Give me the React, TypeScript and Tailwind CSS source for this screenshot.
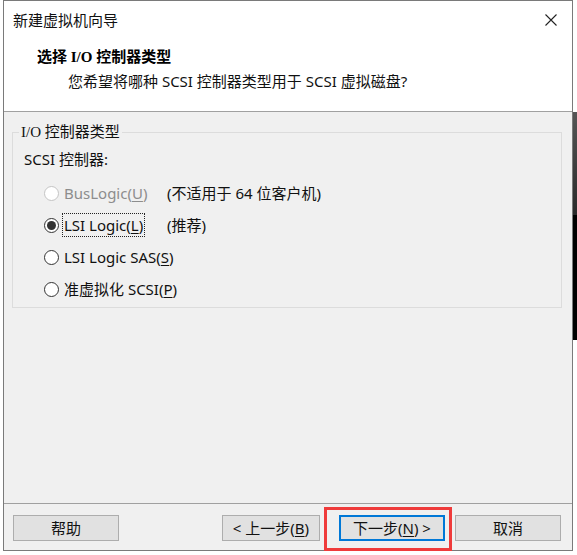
import React from 'react';

const UI = { fontFamily: '"Noto Sans", "Noto Sans CJK SC", sans-serif' };
const SERIF = { fontFamily: '"Liberation Serif", "Noto Sans CJK SC", serif' };

type Opt = { label: string; key: string; note?: string; checked?: boolean; disabled?: boolean; focus?: boolean };

const OPTIONS: Opt[] = [
  { label: 'BusLogic', key: 'U', note: '(不适用于 64 位客户机)', disabled: true },
  { label: 'LSI Logic', key: 'L', note: '(推荐)', checked: true, focus: true },
  { label: 'LSI Logic SAS', key: 'S' },
  { label: '准虚拟化 SCSI', key: 'P' },
];

function Radio({ checked, disabled }: { checked?: boolean; disabled?: boolean }) {
  return (
    <span
      className={`w-[15px] h-[15px] rounded-full border bg-white flex items-center justify-center shrink-0 ${
        disabled ? 'border-[#c4c4c4]' : 'border-[#333333]'
      }`}
    >
      {checked && <span className="w-[9px] h-[9px] rounded-full bg-[#333333]" />}
    </span>
  );
}

function Btn({ children, w, primary }: { children: React.ReactNode; w: string; primary?: boolean }) {
  return (
    <button
      className={`${w} h-[26px] bg-[#e1e1e1] text-[15px] leading-none text-[#111] flex items-center justify-center whitespace-nowrap ${
        primary ? 'border-2 border-[#0078d7]' : 'border border-[#adadad]'
      }`}
    >
      {children}
    </button>
  );
}

export default function App() {
  return (
    <div className="relative w-[577px] h-[555px] bg-white overflow-hidden" style={UI}>
      {/* background window peeking out on the right */}
      <div className="absolute left-[573px] top-[112px] w-[4px] h-[103px] bg-gradient-to-b from-[#555] to-[#2a2a2a]" />
      <div className="absolute left-[573px] top-[215px] w-[4px] h-[125px] bg-black" />

      <div className="ml-[3px] w-[570px] h-[551px] border border-[#7a7a7a] bg-[#f0f0f0] flex flex-col">
        {/* title + header */}
        <div className="h-[111px] bg-white border-b border-[#a0a0a0] shrink-0">
          <div className="h-[38px] flex items-center justify-between pl-[9px] pr-[15px]">
            <span className="text-[15px] text-[#111]">新建虚拟机向导</span>
            <svg width="12" height="12" viewBox="0 0 12 12" className="text-[#222]">
              <path d="M0.5 0.5 L11.5 11.5 M11.5 0.5 L0.5 11.5" stroke="currentColor" strokeWidth="1.1" />
            </svg>
          </div>
          <div className="pl-[33px] mt-[8px] text-[15px] leading-[20px] font-bold text-black" style={SERIF}>
            选择 I/O 控制器类型
          </div>
          <div className="pl-[64px] mt-[4px] text-[15px] leading-[20px] text-[#111]">
            您希望将哪种 SCSI 控制器类型用于 SCSI 虚拟磁盘?
          </div>
        </div>

        {/* body */}
        <div className="flex-1 pt-[9px]">
          <fieldset className="ml-[8px] mr-[10px] h-[187px] border border-[#dcdcdc] px-[11px]">
            <legend className="-ml-[5px] px-[2px] text-[15px] leading-[22px] text-[#111]" style={SERIF}>
              I/O 控制器类型
            </legend>
            <div className="mt-[6px] text-[15px] leading-[20px] text-[#111]">SCSI 控制器:</div>
            <div className="mt-[8px] pl-[20px] flex flex-col">
              {OPTIONS.map((o) => (
                <div key={o.key} className="h-[32px] flex items-center text-[15px] leading-[20px] whitespace-nowrap">
                  <Radio checked={o.checked} disabled={o.disabled} />
                  <span className={`ml-[4px] px-[1px] w-[104px] ${o.disabled ? 'text-[#8d8d8d]' : 'text-[#111]'}`}>
                    <span className={o.focus ? 'outline outline-1 outline-dotted outline-[#222] outline-offset-[1px]' : ''}>
                      {o.label}(<span className="underline underline-offset-2">{o.key}</span>)
                    </span>
                  </span>
                  {o.note && <span className="text-[#111]">{o.note}</span>}
                </div>
              ))}
            </div>
          </fieldset>
        </div>

        {/* footer */}
        <div className="relative h-[47px] border-t border-[#a0a0a0] shrink-0 flex items-start pt-[11px] pl-[9px] pr-[11px]">
          <Btn w="w-[106px]">帮助</Btn>
          <div className="flex-1" />
          <Btn w="w-[98px]">
            &lt; 上一步(<span className="underline underline-offset-2">B</span>)
          </Btn>
          <div className="w-[19px]" />
          <Btn w="w-[106px]" primary>
            下一步(<span className="underline underline-offset-2">N</span>) &gt;
          </Btn>
          <div className="w-[10px]" />
          <Btn w="w-[106px]">取消</Btn>
          {/* annotation highlight */}
          <div className="absolute left-[320px] top-[3px] w-[128px] h-[44px] border-[3px] border-[#ef3b3b]" />
        </div>
      </div>
    </div>
  );
}
